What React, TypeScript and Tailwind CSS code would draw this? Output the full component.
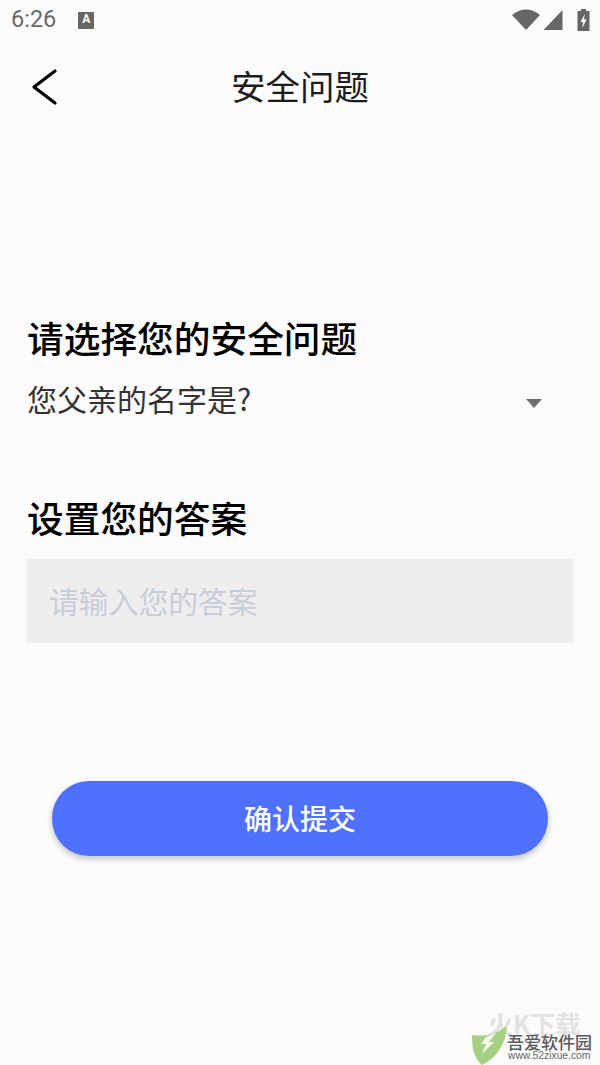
const cjk = "font-['Noto_Sans_CJK_SC','Noto_Sans',sans-serif]";

function StatusBar() {
  return (
    <div className="flex h-[40px] items-center justify-between pl-[11px] pr-[10px] text-[#6a6a6a]">
      <div className="flex items-center gap-[22px]">
        <span className="font-['Roboto',sans-serif] text-[23.5px] leading-none">6:26</span>
        <div className="flex h-[17px] w-[16px] items-center justify-center rounded-[1px] bg-[#666] pb-[2px] text-[12px] font-bold leading-none text-white font-['Roboto',sans-serif]">
          A
        </div>
      </div>
      <div className="flex items-center gap-[3px]">
        <svg width="28" height="22" viewBox="0 0 28 22">
          <path d="M0 6 C8 -1.5 20 -1.5 28 6 L14 21 Z" fill="#666" />
        </svg>
        <svg width="20" height="22" viewBox="0 0 20 22">
          <path d="M19.5 1 V21 H0.5 Z" fill="#666" />
        </svg>
        <svg width="13" height="24" viewBox="0 0 13 24" className="ml-[11px]">
          <path d="M4 1 H9 V3 H12.5 V23 H0.5 V3 H4 Z" fill="#666" />
          <path d="M7.8 6 L3.5 14 H6 L5.3 20 L9.6 11.5 H7 Z" fill="#fff" />
        </svg>
      </div>
    </div>
  );
}

function Watermark() {
  return (
    <div className="absolute bottom-0 right-0 h-[80px] w-[150px]">
      <div className={`absolute left-[38px] top-[28px] h-[20px] whitespace-nowrap text-[25px] font-bold leading-[20px] text-[#e2e2e2] ${cjk}`}>
        火K下载
      </div>
      <svg width="36" height="41" viewBox="0 0 36 41" className="absolute left-[22px] top-[40px]">
        <path d="M35 0 C34 18 26 32 10 40 C3 34 0 26 0 10 C14 12 26 9 35 0 Z" fill="#a6d184" />
        <path d="M14 12 L24 8 L17 17 L22 17 L10 29 L14 19 L9 19 Z" fill="#f4f9ee" />
      </svg>
      <div className={`absolute left-[57px] top-[47px] h-[19px] whitespace-nowrap text-[17px] font-medium leading-[19px] text-[#5a5a5a] ${cjk}`}>
        吾爱软件园
      </div>
      <div className="absolute left-[58px] top-[66px] whitespace-nowrap font-['Liberation_Sans',sans-serif] text-[10.3px] leading-none text-[#666]">
        www.52zixue.com
      </div>
    </div>
  );
}

export default function App() {
  return (
    <div className={`relative h-[1065px] w-[600px] overflow-hidden bg-[#fbfbfb] ${cjk}`}>
      <StatusBar />

      <div className="relative flex h-[90px] items-center justify-center">
        <svg width="28" height="38" viewBox="0 0 28 38" className="absolute left-[30px] top-[28px]">
          <path d="M25 3 L4 19 L25 35" fill="none" stroke="#000" strokeWidth="3.2" strokeLinecap="round" strokeLinejoin="round" />
        </svg>
        <h1 className="text-[34.5px] leading-none text-[#1c1c1c]">安全问题</h1>
      </div>

      <div className="px-[27px] pt-[185px]">
        <h2 className="text-[36.7px] font-medium leading-[44px] text-black">请选择您的安全问题</h2>
        <div className="mt-[17px] flex h-[44px] items-center justify-between pr-[31px]">
          <span className="text-[30px] leading-none text-[#333]">您父亲的名字是?</span>
          <div className="mt-[11px] h-0 w-0 border-x-[8px] border-t-[9px] border-x-transparent border-t-[#6e6e6e]" />
        </div>

        <h2 className="mt-[75px] text-[36.7px] font-medium leading-[44px] text-black">设置您的答案</h2>
        <div className="mt-[20px] flex h-[84px] items-center bg-[#efedee] px-[22px]">
          <span className="text-[29.8px] leading-none text-[#c8ced7]">请输入您的答案</span>
        </div>
      </div>

      <div className="mt-[138px] px-[52px]">
        <button className="flex h-[75px] w-full items-center justify-center rounded-[37px] bg-[#5070ff] pb-[2px] text-[28px] font-medium text-white shadow-[0_3px_6px_rgba(0,0,0,0.22)]">
          确认提交
        </button>
      </div>

      <Watermark />
    </div>
  );
}
